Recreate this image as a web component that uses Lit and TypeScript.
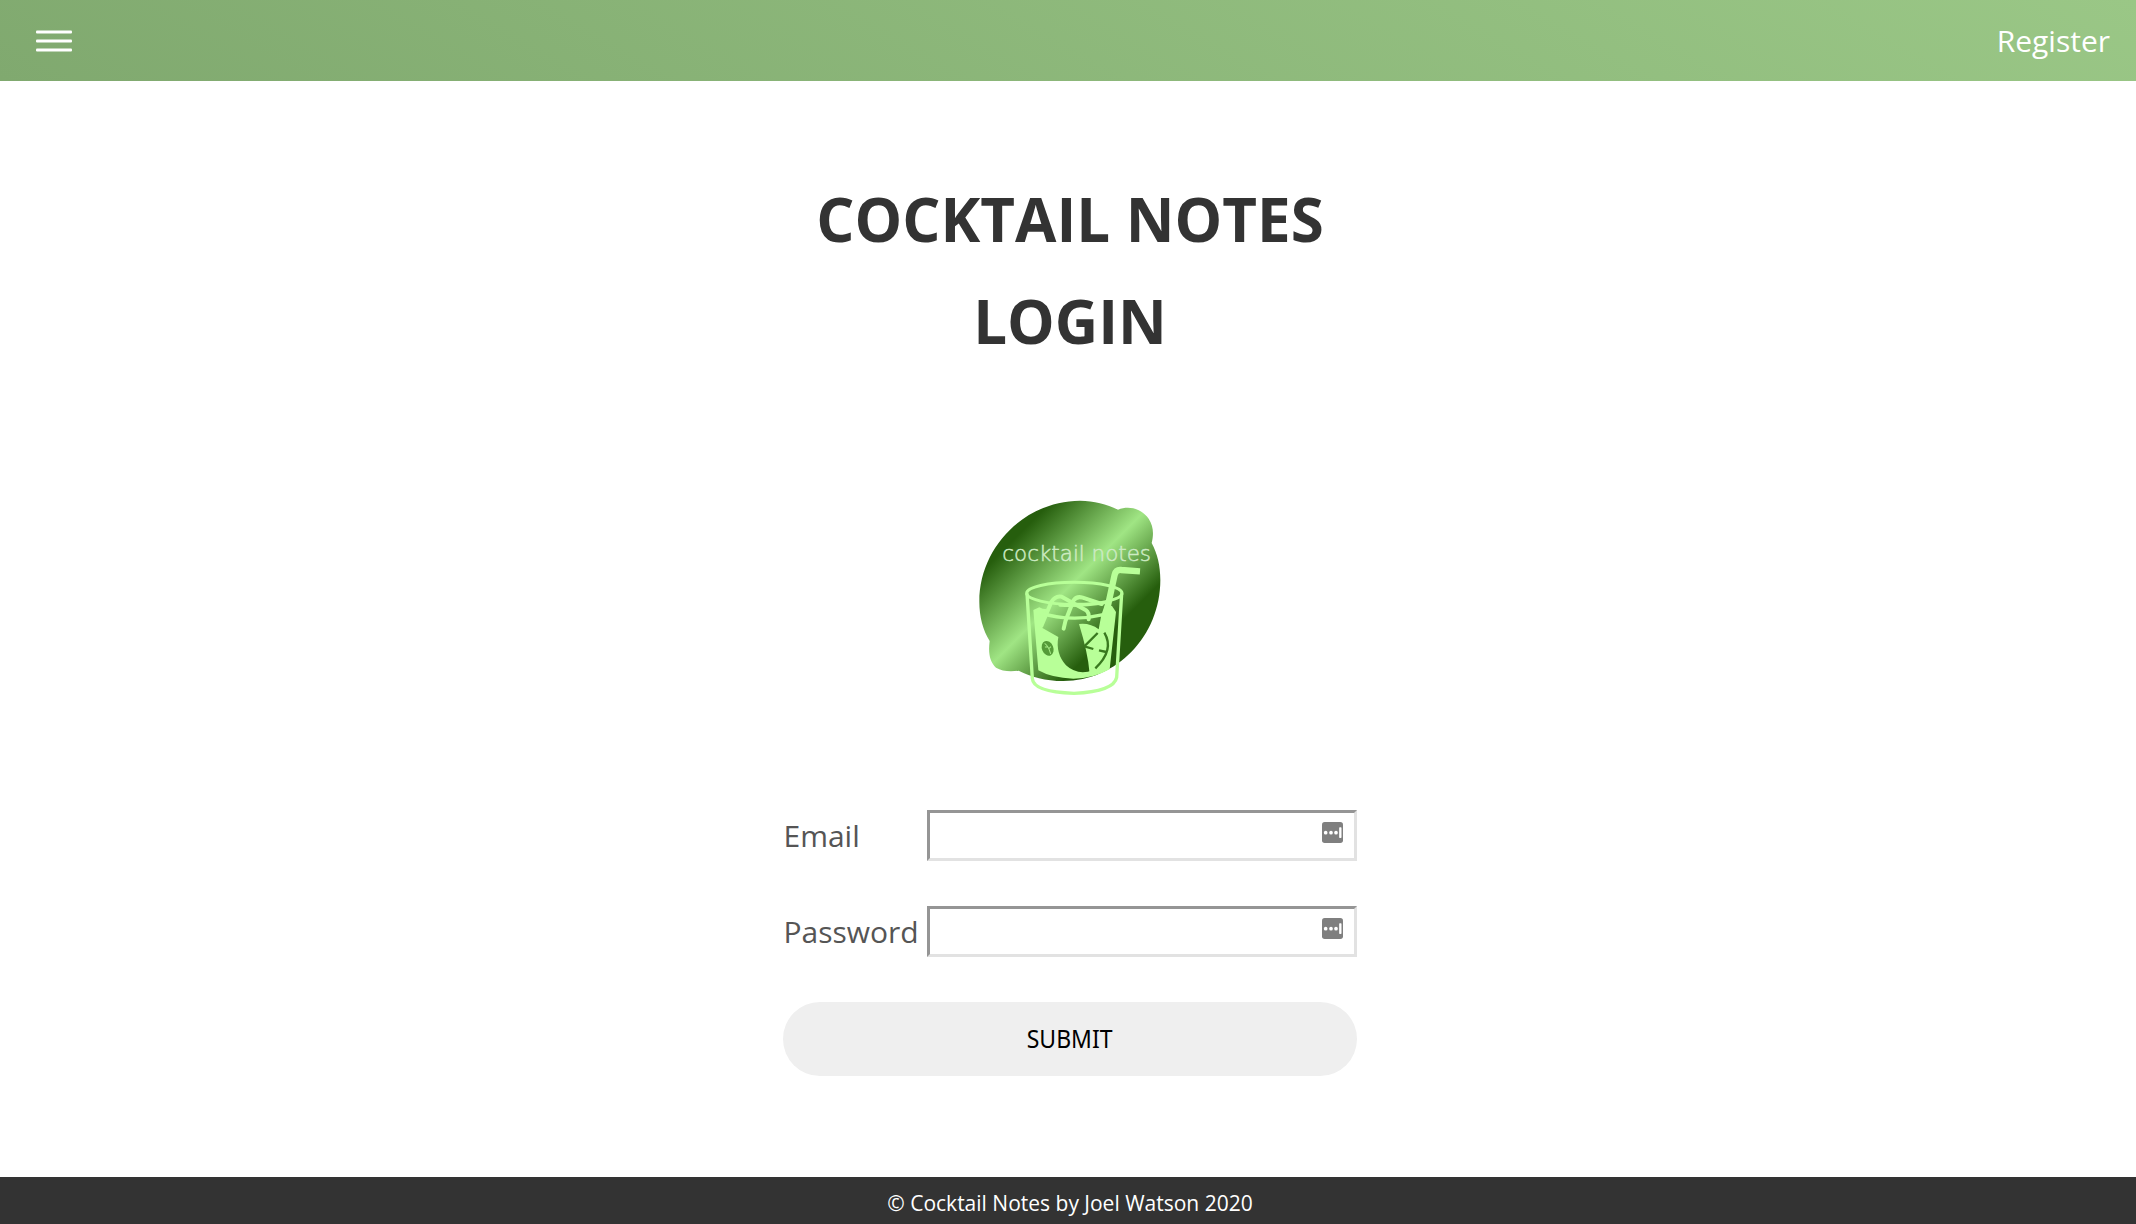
import { LitElement, html, css, svg } from "lit";
import { customElement, property } from "lit/decorators.js";

@customElement("cocktail-logo")
export class CocktailLogo extends LitElement {
  static styles = css`
    :host { display: block; width: 220px; height: 230px; }
    svg { display: block; width: 100%; height: 100%; }
    .word { font-family: "DejaVu Sans", "Open Sans", sans-serif; font-weight: 200; font-size: 66px; fill: #cdebc3; stroke: #cdebc3; stroke-width: 1.5; }
  `;

  private glass() {
    return svg`
      <path fill="#b8ff98" d="M220 390L238 382Q246 388 262 388L242 441L295 471Q286 520 318 556Q346 582 384 575L388 574Q384 520 357 432Q390 428 416 448L424 405L434 376L456 378L468 396L449 568Q400 596 340 596Q275 594 235 571Z"/>
      <path fill="none" stroke="#b8ff98" stroke-width="10" d="M201 340L217 596Q220 636 342 640Q462 634 470 592L485 340"/>
      <ellipse cx="343" cy="340" rx="143" ry="33" fill="none" stroke="#b8ff98" stroke-width="9"/>
      <g fill="none" stroke="#b8ff98" stroke-width="12" stroke-linecap="round" stroke-linejoin="round">
        <path d="M244 438L274 366Q286 346 305 350L378 391Q388 397 386 418"/>
        <path d="M311 446L316 424L340 362Q350 347 368 353L425 372"/>
        <path d="M236 397Q330 428 430 404M300 375Q360 379 440 367" stroke-width="10"/>
      </g>
      <path fill="none" stroke="#b8ff98" stroke-width="19" stroke-linejoin="round" d="M540 274L484 270Q468 268 464 284L428 450"/>
      <g fill="none" stroke="#39791f" stroke-width="7">
        <path d="M433 458Q464 510 406 565M373 499L413 459M373 499L400 507M417 511L439 516"/>
      </g>
      <g transform="rotate(-22 263 505)">
        <ellipse cx="263" cy="505" rx="17" ry="23" fill="#559b38"/>
        <path d="M260 488Q268 500 265 524M265 501L257 498M266 507L274 504" fill="none" stroke="#a9ed89" stroke-width="3"/>
      </g>
    `;
  }

  render() {
    return html`
      <svg viewBox="0 0 660 690" role="img" aria-label="cocktail notes">
        <defs>
          <linearGradient id="rind" gradientUnits="userSpaceOnUse" x1="170" y1="170" x2="455" y2="455">
            <stop offset="0" stop-color="#265e0d" />
            <stop offset="0.54" stop-color="#a0e584" />
            <stop offset="1" stop-color="#265e0d" />
          </linearGradient>
        </defs>
        <path fill="url(#rind)" d="M58 365C58 200 195 63 360 62C402 62 440 73 474 89C510 75 546 88 566 116C580 138 582 160 575 189C592 220 601 258 601 300C601 468 470 603 310 603C256 603 214 591 176 572C150 575 126 574 108 563C90 546 84 522 89 483C69 450 58 410 58 365Z" />
        ${this.glass()}
        <text class="word" x="127" y="244" textLength="446" lengthAdjust="spacingAndGlyphs">cocktail notes</text>
      </svg>
    `;
  }
}

@customElement("login-field")
export class LoginField extends LitElement {
  @property() label = "";
  @property() type = "text";

  static styles = css`
    :host { display: flex; justify-content: space-between; align-items: center; height: 51px; }
    .label { padding-left: 0.5px; font-size: 30px; line-height: 51px; color: #555; }
    .box { display: flex; box-sizing: border-box; width: 430px; height: 51px; border: 3px solid;
      border-color: #959595 #e2e2e2 #e2e2e2 #959595; background: #fff; padding: 9px 11px 0 6px; }
    .input { flex: 1; min-width: 0; height: 30px; border: 0; padding: 0; outline: 0; background: none; font: 24px "Open Sans", sans-serif; }
    .key { display: block; width: 21px; height: 21px; }
  `;

  render() {
    return html`
      <label class="label" for="entry">${this.label}</label>
      <div class="box">
        <input class="input" id="entry" type=${this.type} />
        <svg class="key" viewBox="0 0 63 63">
          <rect width="63" height="63" rx="8" fill="#7f7f7f" />
          <g fill="#fff">
            <circle cx="11" cy="32" r="5.5" /><circle cx="27" cy="32" r="5.5" /><circle cx="42" cy="32" r="5.5" />
            <rect x="51.500" y="16" width="7" height="32" rx="2" />
          </g>
        </svg>
      </div>
    `;
  }
}

@customElement("app-root")
export class AppRoot extends LitElement {
  static styles = css`
    :host { display: flex; flex-direction: column; height: 100vh; min-height: 1224px; background: #fff;
      font-family: "Open Sans", "Noto Sans", sans-serif; }
    .header { display: flex; flex: none; box-sizing: border-box; height: 81px; align-items: center; justify-content: space-between;
      padding: 0 26px 0 36px; background: linear-gradient(30deg, #80a96f, #9ac786); }
    .menu { display: block; width: 36px; height: 22px; }
    .link { color: #fff; font-size: 30px; line-height: 51px; text-decoration: none; }
    .main { display: flex; flex: 1; flex-direction: column; align-items: center; padding-left: 4px; }
    .title { margin: 87px 0 0; width: 574px; font-size: 60px; line-height: 102px; font-weight: 700; text-align: center;
      color: #333; text-transform: uppercase; }
    .logo { margin-top: 108px; }
    .form { display: flex; flex-direction: column; width: 574px; margin-top: 100px; gap: 45px; }
    .submit { height: 74px; border: 0; border-radius: 37px; background: #efefef; color: #000; padding: 0 0 2px;
      font: 25px "Noto Sans", sans-serif; }
    .caption { display: inline-block; transform: scaleX(0.92); }
    .footer { flex: none; height: 47px; padding: 5px 0 0 4px; box-sizing: border-box; background: #333; color: #fff;
      font-size: 21px; line-height: 42px; text-align: center; }
  `;

  render() {
    return html`
      <header class="header">
        <svg class="menu" viewBox="0 0 36 22">
          <g fill="#fff">
            <rect y="0.500" width="36" height="3" rx="1" />
            <rect y="9.500" width="36" height="3" rx="1" />
            <rect y="18.500" width="36" height="3" rx="1" />
          </g>
        </svg>
        <a class="link" href="#">Register</a>
      </header>
      <main class="main">
        <h1 class="title">Cocktail Notes Login</h1>
        <cocktail-logo class="logo"></cocktail-logo>
        <form class="form">
          <login-field label="Email"></login-field>
          <login-field label="Password" type="password"></login-field>
          <button class="submit" type="button"><span class="caption">SUBMIT</span></button>
        </form>
      </main>
      <footer class="footer">© Cocktail Notes by Joel Watson 2020</footer>
    `;
  }
}
